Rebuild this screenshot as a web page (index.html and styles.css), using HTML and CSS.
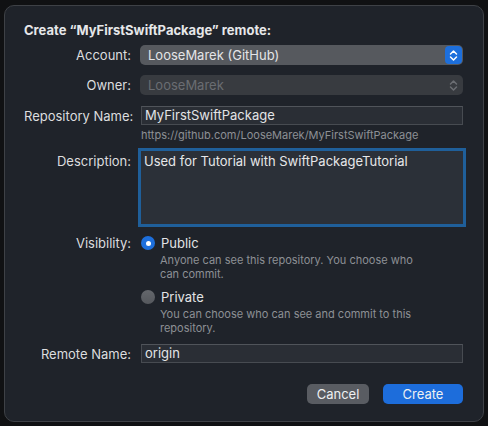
FILE: index.html
```html
<!DOCTYPE html>
<html>
<head>
<meta charset="utf-8">
<link rel="stylesheet" href="styles.css">
</head>
<body>
<div class="window">
  <h1 class="title">Create “MyFirstSwiftPackage” remote:</h1>

  <div class="row r-account">
    <label class="lbl">Account:</label>
    <div class="popup">
      <span>LooseMarek (GitHub)</span>
      <span class="stepper">
        <svg width="9" height="13" viewBox="0 0 9 13"><path d="M1.5 5 L4.5 2 L7.5 5 M1.5 8 L4.5 11 L7.5 8" fill="none" stroke="#fff" stroke-width="1.5" stroke-linecap="round" stroke-linejoin="round"/></svg>
      </span>
    </div>
  </div>

  <div class="row r-owner">
    <label class="lbl">Owner:</label>
    <div class="popup disabled">
      <span>LooseMarek</span>
      <span class="stepper plain">
        <svg width="9" height="13" viewBox="0 0 9 13"><path d="M1.5 5 L4.5 2 L7.5 5 M1.5 8 L4.5 11 L7.5 8" fill="none" stroke="#6b6e73" stroke-width="1.5" stroke-linecap="round" stroke-linejoin="round"/></svg>
      </span>
    </div>
  </div>

  <div class="row r-repo">
    <label class="lbl">Repository Name:</label>
    <div class="field">MyFirstSwiftPackage</div>
  </div>
  <div class="row r-url">
    <span></span>
    <div class="hint">https://github.com/LooseMarek/MyFirstSwiftPackage</div>
  </div>

  <div class="row r-desc">
    <label class="lbl">Description:</label>
    <div class="textarea">Used for Tutorial with SwiftPackageTutorial</div>
  </div>

  <div class="row r-vis">
    <label class="lbl">Visibility:</label>
    <div class="option">
      <div class="radio-line"><span class="radio on"></span><span>Public</span></div>
      <div class="hint help">Anyone can see this repository. You choose who can commit.</div>
    </div>
  </div>

  <div class="row r-priv">
    <span></span>
    <div class="option">
      <div class="radio-line"><span class="radio"></span><span>Private</span></div>
      <div class="hint help">You can choose who can see and commit to this repository.</div>
    </div>
  </div>

  <div class="row r-remote">
    <label class="lbl">Remote Name:</label>
    <div class="field">origin</div>
  </div>

  <div class="buttons">
    <button class="btn cancel">Cancel</button>
    <button class="btn create">Create</button>
  </div>
</div>
</body>
</html>
```

FILE: styles.css
```css
* { box-sizing: border-box; }
html, body {
  margin: 0;
  padding: 0;
  background: #101113;
  width: 488px;
  height: 426px;
  overflow: hidden;
}
body {
  font-family: Inter, "Noto Sans", "Liberation Sans", sans-serif;
  font-size: 13px;
  color: #dfe0e2;
}
.window {
  margin: 5px 0 0 4px;
  width: 480px;
  height: 417px;
  background: #1f232a;
  border: 1px solid #3e4146;
  border-radius: 10px;
  padding: 16px 20px 0 19px;
}
.title {
  margin: 0;
  font-size: 13px;
  font-weight: 700;
  line-height: 16px;
  color: #e6e7e9;
  padding-left: 0;
}
.row {
  display: grid;
  grid-template-columns: 107px 323px;
  column-gap: 9px;
  align-items: center;
}
.lbl {
  text-align: right;
  line-height: 16px;
  color: #dcdddf;
  white-space: nowrap;
}
.r-account { margin-top: 7px; }
.r-owner { margin-top: 10px; }
.r-repo { margin-top: 11px; }
.r-url { margin-top: 3px; }
.r-desc { margin-top: 9px; align-items: start; }
.r-desc .lbl { margin-top: 2px; }
.r-vis { margin-top: 11px; align-items: start; }
.r-priv { margin-top: 8px; align-items: start; }
.r-remote { margin-top: 9px; }

.popup {
  height: 20px;
  border-radius: 5px;
  background: #56595e;
  display: flex;
  align-items: center;
  justify-content: space-between;
  padding: 0 1px 0 8px;
  line-height: 16px;
  color: #e4e5e7;
}
.popup.disabled {
  background: #383b40;
  color: #6a6d72;
}
.stepper {
  width: 17px;
  height: 18px;
  border-radius: 4px;
  background: #1d6fdc;
  display: flex;
  align-items: center;
  justify-content: center;
}
.stepper.plain { background: transparent; }
.stepper svg { display: block; }

.field {
  height: 19px;
  margin-left: 1px;
  background: #2a2e35;
  border: 1px solid #474b51;
  border-top-color: #50545a;
  padding: 0 3px;
  line-height: 17px;
  color: #e3e4e6;
}
.r-remote .field { height: 19px; }
.hint {
  font-size: 11px;
  line-height: 14px;
  color: #8d9095;
}
.r-url .hint { margin-left: 1px; }
.textarea {
  margin-left: 1px;
  height: 73px;
  background: #2b3038;
  box-shadow: 0 0 0 3px #1f5f9a;
  padding: 2px 3px;
  line-height: 16px;
  color: #e6e7e9;
}
.option { padding-left: 1px; }
.radio-line {
  display: flex;
  align-items: center;
  gap: 6px;
  line-height: 16px;
  color: #e2e3e5;
}
.radio {
  width: 14px;
  height: 14px;
  border-radius: 50%;
  background: linear-gradient(#64676c, #55585d);
  display: inline-block;
  position: relative;
  flex: none;
}
.radio.on { background: #1d6fdc; }
.radio.on::after {
  content: "";
  position: absolute;
  left: 4.5px;
  top: 4.5px;
  width: 5px;
  height: 5px;
  border-radius: 50%;
  background: #fff;
}
.help {
  padding-left: 19px;
  margin-top: 2px;
  width: 280px;
}
.buttons {
  margin-top: 21px;
  display: flex;
  justify-content: flex-end;
  gap: 14px;
}
.btn {
  font-family: inherit;
  font-size: 13px;
  height: 20px;
  border: none;
  border-radius: 5px;
  color: #eef0f2;
  padding: 0;
  line-height: 20px;
}
.cancel { width: 62px; background: #595c62; }
.create { width: 80px; background: #1d6ddb; }
```
